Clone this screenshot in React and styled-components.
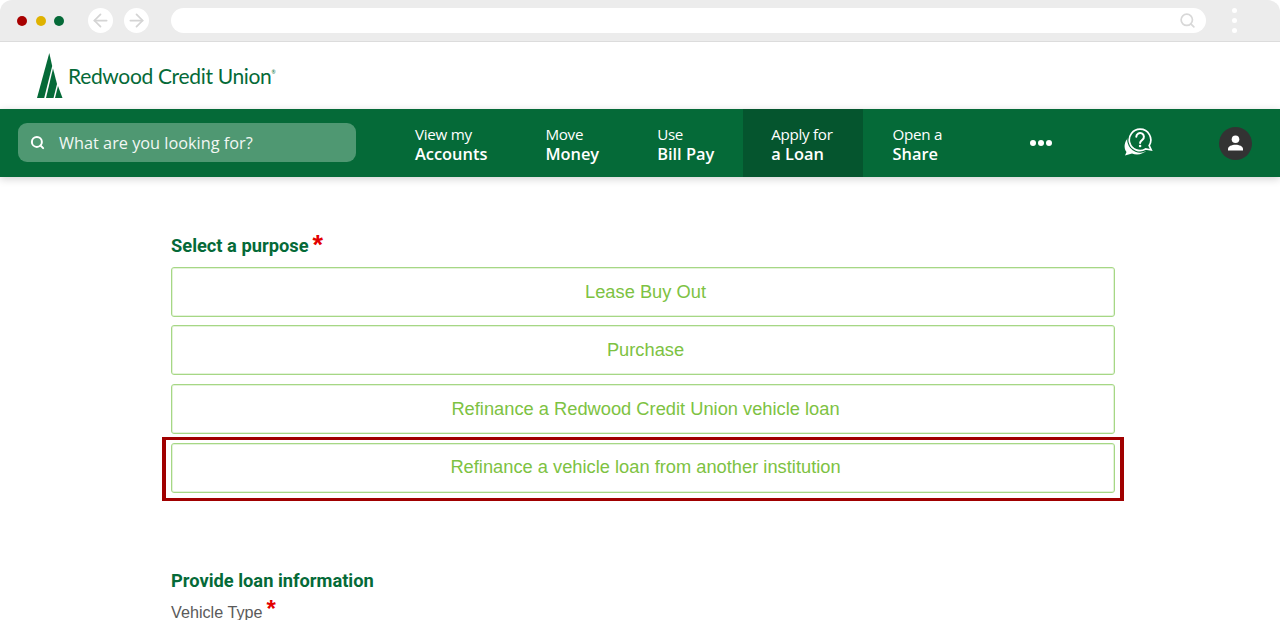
import React from 'react';
import styled, { createGlobalStyle } from 'styled-components';
import { ArrowLeft, ArrowRight, Search } from 'lucide-react';

const Global = createGlobalStyle`
  html, body { margin: 0; padding: 0; background: #fff; }
  body { width: 1280px; height: 620px; overflow: hidden; font-family: "Liberation Sans", Arial, sans-serif; }
`;

const Page = styled.div`
  width: 1280px;
  height: 620px;
  overflow: hidden;
  display: flex;
  flex-direction: column;
`;

const Chrome = styled.div`
  height: 42px;
  flex: none;
  box-sizing: border-box;
  background: #ececec;
  border-bottom: 1px solid #dcdcdc;
  border-top-right-radius: 12px;
  border-top-left-radius: 12px;
  display: flex;
  align-items: center;
  padding-left: 17px;
`;

const Dot = styled.span`
  width: 10px;
  height: 10px;
  border-radius: 50%;
  background: ${p => p.$c};
  margin-right: 8.5px;
  flex: none;
`;

const RoundBtn = styled.span`
  width: 25px;
  height: 25px;
  border-radius: 50%;
  background: #fff;
  color: #d4d4d4;
  display: flex;
  align-items: center;
  justify-content: center;
  margin-left: ${p => p.$ml}px;
  flex: none;
`;

const Address = styled.div`
  width: 1035px;
  height: 25px;
  margin-left: 22px;
  border-radius: 13px;
  background: #fff;
  color: #d8d8d8;
  display: flex;
  align-items: center;
  justify-content: flex-end;
  padding-right: 10px;
  box-sizing: border-box;
  flex: none;
`;

const Kebab = styled.div`
  margin-left: 26px;
  display: flex;
  flex-direction: column;
  gap: 5px;
  span { width: 5px; height: 5px; border-radius: 50%; background: #fff; display: block; }
`;

const Brand = styled.div`
  height: 67px;
  flex: none;
  display: flex;
  align-items: flex-start;
  padding: 11px 0 0 36px;
  box-sizing: border-box;
  background: #fff;
`;

const Wordmark = styled.span`
  font-family: "Lato", sans-serif;
  font-size: 21px;
  color: #056a38;
  margin: 10px 0 0 4px;
  letter-spacing: -0.33px;
  line-height: 26px;
  sup { font-size: 5px; vertical-align: 10px; line-height: 0; }
`;

const Nav = styled.nav`
  height: 68px;
  flex: none;
  background: #056a38;
  box-shadow: 0 2px 8px rgba(0,0,0,.18);
  display: flex;
  align-items: stretch;
  padding-left: 18px;
  font-family: "Open Sans", sans-serif;
  color: #fff;
  position: relative;
`;

const SearchBox = styled.div`
  width: 338px;
  height: 39px;
  margin: 14px 31px 0 0;
  background: #4f9872;
  border-radius: 9px;
  display: flex;
  align-items: center;
  padding-left: 12px;
  box-sizing: border-box;
  font-size: 16.3px;
  color: #f2f7f4;
  gap: 14px;
  flex: none;
`;

const Item = styled.div`
  padding: 2px ${p => (p.$active ? 30 : 28)}px 0 28px;
  margin-right: ${p => p.$mr ?? 2}px;
  display: flex;
  flex-direction: column;
  justify-content: center;
  background: ${p => (p.$active ? '#05552e' : 'transparent')};
  flex: none;
  span { font-size: 15.2px; line-height: 19px; letter-spacing: -0.3px; display: block; white-space: nowrap; }
  b { font-size: 16.4px; font-weight: 600; line-height: 20px; display: block; white-space: nowrap; }
`;

const More = styled.div`
  display: flex;
  gap: 2px;
  align-items: center;
  margin-left: 58px;
  span { width: 6px; height: 6px; border-radius: 50%; background: #fff; display: block; }
`;

const Help = styled.svg`
  align-self: center;
  margin: -2px 0 0 71px;
  flex: none;
`;

const Avatar = styled.div`
  width: 33px;
  height: 33px;
  border-radius: 50%;
  background: #333;
  align-self: center;
  margin-left: 66px;
  display: flex;
  align-items: center;
  justify-content: center;
  flex: none;
`;

const Main = styled.main`
  padding: 57px 0 0 171px;
  width: 944px;
  position: relative;
`;

const Heading = styled.div`
  font-family: "Roboto", sans-serif;
  font-weight: 700;
  font-size: 18.3px;
  line-height: 24px;
  color: #056a38;
  display: flex;
  align-items: flex-start;
  height: 24px;
`;

const Star = styled.span`
  color: #e30000;
  font-family: "Liberation Sans", sans-serif;
  font-size: ${p => p.$s}px;
  font-weight: 700;
  line-height: ${p => p.$lh}px;
  margin-left: ${p => p.$ml}px;
  margin-top: ${p => p.$mt}px;
`;

const Options = styled.div`
  display: flex;
  flex-direction: column;
  gap: 9px;
  margin-top: 9px;
`;

const Option = styled.button`
  width: 944px;
  height: 50px;
  box-sizing: border-box;
  background: #fff;
  border: 1px solid #a6d785;
  box-shadow: inset 0 0 0 1px rgba(166, 215, 133, .3);
  border-radius: 3px;
  color: #7dc242;
  font-family: "Liberation Sans", Arial, sans-serif;
  font-size: 18.3px;
  line-height: 22px;
  padding: 0 0 0 5px;
  position: relative;
  flex: none;
  &:first-child { margin-bottom: -1px; }
  ${p => p.$highlight && `
    padding-bottom: 2px;
    &::after {
      content: "";
      position: absolute;
      top: -7px;
      bottom: -9px;
      left: -10px;
      right: -10px;
      border: solid #a00000;
      border-width: 3px 4px;
      pointer-events: none;
    }
  `}
`;

const SectionHeading = styled(Heading)`
  margin-top: 76px;
`;

const FieldLabel = styled.div`
  display: flex;
  align-items: flex-start;
  margin-top: 8px;
  font-size: 16.2px;
  line-height: 19px;
  color: #5a5a5a;
  padding-top: 2px;
`;

const tabs = [
  ['View my', 'Accounts'],
  ['Move', 'Money'],
  ['Use', 'Bill Pay', 1],
  ['Apply for', 'a Loan', 2, true],
  ['Open a', 'Share'],
];

const purposes = [
  'Lease Buy Out',
  'Purchase',
  'Refinance a Redwood Credit Union vehicle loan',
  'Refinance a vehicle loan from another institution',
];

export default function App() {
  return (
    <Page>
      <Global />
      <Chrome>
        <Dot $c="#a80000" />
        <Dot $c="#dfb200" />
        <Dot $c="#056a38" />
        <RoundBtn $ml={15.5}><ArrowLeft size={21} /></RoundBtn>
        <RoundBtn $ml={11}><ArrowRight size={21} /></RoundBtn>
        <Address><Search size={17} strokeWidth={2.4} /></Address>
        <Kebab><span /><span /><span /></Kebab>
      </Chrome>
      <Brand>
        <svg width="28" height="46" viewBox="0 0 28 46" aria-hidden="true">
          <path fill="#056a38" d="M13.3 0 L16.2 13 L8.2 45 L1 45 Z" />
          <path fill="#056a38" d="M17 15.5 L21 31 L17.5 45 L10 45 Z" />
          <path fill="#056a38" d="M22 33 L26.5 45 L19 45 Z" />
        </svg>
        <Wordmark>Redwood Credit Union<sup>®</sup></Wordmark>
      </Brand>
      <Nav>
        <SearchBox>
          <Search size={15} strokeWidth={3.2} color="#fff" />
          What are you looking for?
        </SearchBox>
        {tabs.map(([a, b, mr, active]) => (
          <Item key={b} $mr={mr} $active={active}>
            <span>{a}</span>
            <b>{b}</b>
          </Item>
        ))}
        <More><span /><span /><span /></More>
        <Help width="30" height="30" viewBox="0 0 30 30" fill="none" aria-hidden="true">
          <path d="M5.5 10.5C1 15 .5 21 3.5 25L2 28.5l7-2c5 1.8 11 1 15-3.5Z" fill="#fff" />
          <path d="M17 2.2a10.7 10.7 0 1 0 5.6 19.8l5.6 1-2-4.5A10.7 10.7 0 0 0 17 2.2Z" fill="#056a38" stroke="#056a38" strokeWidth="4" />
          <path d="M17 2.2a10.7 10.7 0 1 0 5.6 19.8l5.6 1-2-4.5A10.7 10.7 0 0 0 17 2.2Z" fill="#056a38" stroke="#fff" strokeWidth="1.7" />
          <path d="M13.3 9.8a3.8 3.8 0 1 1 6 3.1c-1.4 1-2.2 1.6-2.2 3.1" stroke="#fff" strokeWidth="2" strokeLinecap="round" />
          <circle cx="17.1" cy="19" r="1.3" fill="#fff" />
        </Help>
        <Avatar>
          <svg width="17" height="16" viewBox="0 0 17 16" aria-hidden="true">
            <circle cx="8.5" cy="4.2" r="3.8" fill="#fff" />
            <path d="M1 15.5v-1.6c0-2.6 3.7-4.2 7.5-4.2s7.5 1.6 7.5 4.2v1.6Z" fill="#fff" />
          </svg>
        </Avatar>
      </Nav>
      <Main>
        <Heading>
          Select a purpose
          <Star $s={27} $lh={20} $ml={4} $mt={1}>*</Star>
        </Heading>
        <Options>
          {purposes.map((p, i) => (
            <Option key={p} $highlight={i === 3}>{p}</Option>
          ))}
        </Options>
        <SectionHeading>Provide loan information</SectionHeading>
        <FieldLabel>
          Vehicle Type
          <Star $s={24} $lh={14} $ml={4} $mt={-1}>*</Star>
        </FieldLabel>
      </Main>
    </Page>
  );
}
